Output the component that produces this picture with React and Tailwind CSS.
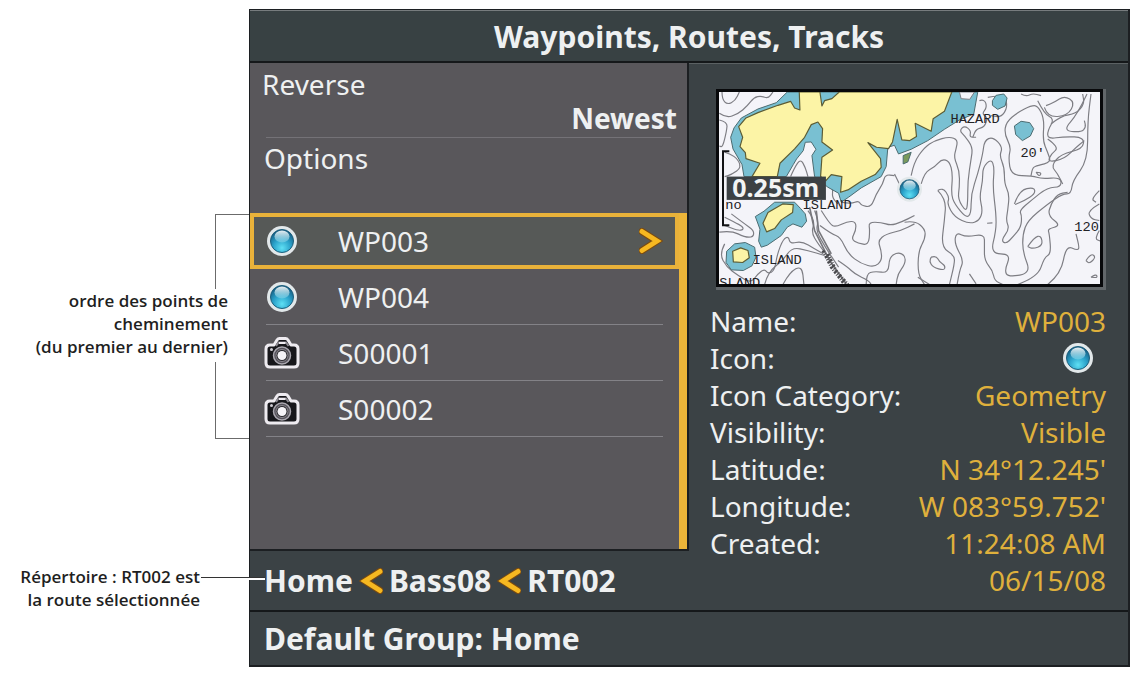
import clsx from "clsx";

const routePoints = [
  { name: "WP003", type: "waypoint" },
  { name: "WP004", type: "waypoint" },
  { name: "S00001", type: "snapshot" },
  { name: "S00002", type: "snapshot" },
];

const details = [
  { label: "Name:", value: "WP003" },
  { label: "Icon:", icon: true },
  { label: "Icon Category:", value: "Geometry" },
  { label: "Visibility:", value: "Visible" },
  { label: "Latitude:", value: "N 34°12.245'" },
  { label: "Longitude:", value: "W 083°59.752'" },
  { label: "Created:", value: "11:24:08 AM" },
  { label: "", value: "06/15/08" },
];

// depth contours, west and east half of the chart
const westContours = [
  "22,14 22,35 38,52 62,40 74,14",
  "14,78 34,92 70,80 98,56 118,30 140,26 160,34 175,14",
  "14,98 38,104 36,130 24,180 14,176",
  "30,195 62,205 82,240 50,262 30,268",
  "228,268 240,240 258,215 272,240 280,268",
  "340,285 356,300 352,330 370,350",
  "30,390 60,405 84,418 86,428 70,430 30,415",
  "14,435 50,430 90,450 116,450 118,430 90,410 50,380",
  "30,470 14,500 36,540 70,565 108,588 130,560 150,545 160,560 180,550 188,500 206,455 222,448 226,470 262,462 300,485 326,500",
  "150,592 160,555 205,520 232,480 280,490 330,505",
  "205,592 225,555 262,535 268,592",
  "280,370 302,400 290,435 310,470 350,520",
  "300,370 312,400 304,430 332,480 372,540",
  "316,415 350,440 378,450 400,500 440,530 480,540 502,520 500,490 490,460 515,440 560,430 600,410",
  "320,370 345,410 362,420 400,402 424,404 424,430 410,456 430,468 462,474 466,430 462,405 500,405 528,415 560,405 600,385",
  "380,345 410,350 432,340 440,355 470,360 485,320 505,290 512,262 540,265",
  "455,592 455,560 480,552 522,558 524,510 550,495 572,505 572,530 550,560 545,592",
  "370,520 400,540 420,560 462,580 470,592",
  "540,260 560,300 575,340",
];

const eastContours = [
  "0,405 30,400 62,425 62,455 42,490 40,560 60,592",
  "20,265 28,225 60,180 90,160 135,148 160,158 155,185 148,210 165,250 165,300 160,335 185,375 190,345 190,280 200,215 205,180 180,145 165,130 180,115 200,130 195,150 215,150",
  "50,290 60,255 90,240 112,215 135,222 145,260 140,320 150,350 185,392 200,380 200,320 220,260 235,200 240,160 265,148 295,180 285,205 300,240 300,290 315,320 310,370 305,400 315,425 290,460 305,470 325,450 350,420 352,385 345,370 380,340 430,300 470,300 470,270 410,275 385,265 320,265 312,210 320,180 300,140 305,105 340,75 380,55 400,55 420,95 415,160 430,195 440,225 400,235 385,240 380,265",
  "100,310 115,300 135,330 128,350 150,390 195,410 225,400 235,370 225,330 235,280 235,240 260,215 270,240 265,300 275,380 275,430 258,500 320,500 300,550 312,570 380,558 355,495 355,440 370,400 430,350 475,320 500,320 505,280 550,220 550,100 560,20",
  "100,310 125,335 120,400 110,480 150,505 150,530 135,592",
  "158,592 165,550 178,520 150,470 155,435 185,450 240,440 240,475 240,520 265,550 270,580 295,592",
  "195,560 215,590",
  "80,510 95,505 105,525 122,535 120,550 85,540 75,522 80,510",
  "330,350 345,308 390,300 392,320 360,340 332,352",
  "370,478 390,450 410,445 415,475 385,485 370,478",
  "340,592 400,570 420,510 440,500 435,440 430,425 470,415 430,385 440,350 460,320 490,315",
  "430,592 470,560 485,475 520,490 525,480 515,440",
  "400,40 420,80 450,95 430,130 430,155 480,148 540,150 535,185 470,200 440,235 460,260 475,290",
  "420,60 430,90 490,85 512,45 480,25 450,45 425,55",
  "440,110 470,85 515,80 540,50 535,20",
  "548,20 520,80 475,130 530,135 545,120 540,100",
  "430,155 465,180 440,200 430,225 480,215 515,180 540,160",
  "350,20 365,28 385,18 410,25",
  "225,40 240,35 248,60 232,80 250,90 240,120 215,125 205,150",
  "250,30 300,20 310,60 290,90 260,85",
  "395,255 412,255 405,268 395,255",
  "585,310 560,335 575,345",
  "585,350 550,370 560,395 585,400",
  "545,520 560,498 575,510 555,530 545,520",
  "560,570 575,560 580,572 560,570",
  "585,430 570,455 590,462",
  "75,592 40,570",
  "248,408 264,407",
];

// runs a quadratic curve through the midpoints of the list
const toPath = (list) => {
  const pts = list.split(" ").map((p) => p.split(",").map(Number));
  let d = `M${pts[0]}`;
  for (let i = 1; i < pts.length - 1; i++) {
    const [x, y] = pts[i];
    const [nx, ny] = pts[i + 1];
    d += ` Q${x},${y} ${(x + nx) / 2},${(y + ny) / 2}`;
  }
  return `${d} L${pts[pts.length - 1]}`;
};

const Sphere = (props) => (
  <svg viewBox="0 0 32 32" width="32" height="32" aria-hidden="true" {...props}>
    <defs>
      <radialGradient id="ball" cx="50%" cy="80%" r="75%">
        <stop offset="0" stopColor="#5fe0f4" />
        <stop offset="0.5" stopColor="#2ba3cb" />
        <stop offset="1" stopColor="#145a80" />
      </radialGradient>
      <linearGradient id="shine" x1="0" y1="0" x2="0" y2="1">
        <stop offset="0" stopColor="#ffffff" stopOpacity="0.9" />
        <stop offset="1" stopColor="#b8ecf5" stopOpacity="0.3" />
      </linearGradient>
    </defs>
    <circle cx="16" cy="16" r="15" fill="#e2e8ea" />
    <circle cx="16" cy="16" r="11.500" fill="url(#ball)" stroke="#1d5f7c" />
    <ellipse cx="16" cy="11.500" rx="7.500" ry="6" fill="url(#shine)" />
  </svg>
);

const Camera = () => (
  <svg viewBox="0 0 36 32" width="36" height="32" aria-hidden="true" className="shrink-0">
    <path
      d="M6 8h4l3-5q1-1.500 2.500-1.500h6q1.500 0 2.500 1.500l3 5h3q4 0 4 4v14q0 4-4 4H6q-4 0-4-4V12q0-4 4-4z"
      fill="#17171b"
      stroke="#eeebf0"
      strokeWidth="3"
      strokeLinejoin="round"
    />
    <path d="M12 9l2.500-3.500h7.500L24.500 9" fill="none" stroke="#8d8a91" strokeWidth="2" />
    <path d="M15 6h6.500" stroke="#eeebf0" strokeWidth="2" />
    <circle cx="7.500" cy="12.500" r="1.500" fill="#cfccd3" />
    <circle cx="18" cy="18.500" r="8.500" fill="#55525a" stroke="#aaa7af" strokeWidth="1.500" />
    <circle cx="18" cy="18.500" r="6" fill="#26252a" stroke="#8d8a91" />
    <circle cx="18" cy="18.500" r="4.500" fill="#f5f3f7" />
  </svg>
);

const Chevron = ({ left }) => (
  <svg viewBox="0 0 24 26" width="24" height="26" aria-hidden="true" className={clsx(left && "rotate-180")}>
    <path d="M3 3.500L18 13 3 22.500" fill="none" stroke="#7a4a10" strokeWidth="7" strokeLinecap="round" />
    <path d="M3 3.500L18 13 3 22.500" fill="none" stroke="#f6b821" strokeWidth="5" strokeLinecap="round" />
  </svg>
);

const Chart = () => (
  <svg
    viewBox="13 14 1144 578"
    role="img"
    aria-label="Chart preview"
    className="block w-full border-3 border-[#08090b] bg-[#f4f4f9]"
  >
    {/* DEPTH CONTOURS */}
    <g fill="none" stroke="#7d7d83" strokeWidth="3.500">
      {westContours.map((c) => (
        <path key={c} d={toPath(c)} />
      ))}
      <g transform="translate(570 0)">
        {eastContours.map((c) => (
          <path key={c} d={toPath(c)} />
        ))}
      </g>
    </g>
    {/* SHALLOWS */}
    <g fill="#79c0d2" stroke="#4b6b70" strokeWidth="3" strokeLinejoin="round">
      <path d="M218 14L185 46 130 65 80 92 58 122 48 150 55 185 82 232 88 268 215 268 236 232 246 215 266 190 272 165 290 164 304 186 292 205 300 268 340 300 372 318 380 345 402 330 440 302 500 268 515 238 520 180 540 174 552 200 590 186 640 160 690 126 735 98 778 80 790 14z" />
      <path d="M834 40L845 24 868 20 878 32 872 56 850 66 834 54zM900 116L920 102 946 106 958 124 948 146 924 160 904 142z" />
      <path d="M180 345L148 372 122 388 136 426 132 462 140 480 158 474 200 445 218 420 235 410 262 420 276 402 272 380 258 364 240 345z" />
      <path d="M92 466L60 470 36 492 34 526 50 548 86 550 112 536 124 510 120 480z" />
      <path d="M566 205L590 195 580 224 566 230z" fill="#7a9a5c" />
    </g>
    <path d="M735 14L740 34 766 36 780 14z" fill="#f4f4f9" stroke="#7d7d83" strokeWidth="3" />
    {/* LAND */}
    <g fill="#fcf4a6" stroke="#5c5c34" strokeWidth="3.500" strokeLinejoin="round">
      <path d="M254 14L256 68 240 62 228 42 190 54 130 76 94 92 72 118 84 150 76 178 92 196 94 214 136 228 112 268 188 268 196 228 240 185 270 150 290 112 310 104 324 124 322 164 354 188 322 210 318 268 334 280 350 262 382 268 378 315 400 308 440 282 482 262 500 240 498 214 460 166 486 180 522 184 534 164 548 96 562 158 586 160 606 148 602 108 650 132 656 94 690 72 712 14 374 14 352 34 330 40 322 56 316 14z" />
      <path d="M145 408L160 376 204 350 236 352 234 376 200 398 180 424 156 434z" />
      <path d="M54 492L78 482 100 490 104 512 84 526 56 524z" />
    </g>
    <path
      d="M285 360L300 430 345 520 395 590M305 370L312 430 350 500"
      fill="none"
      stroke="#77777c"
      strokeWidth="5"
    />
    <path d="M325 490L350 540 390 592M340 500L364 550 400 592" stroke="#4a4a4e" strokeWidth="9" strokeDasharray="7 4 3 4" fill="none" />
    {/* CHART LABELS */}
    <g fontFamily="Liberation Mono, monospace" fontSize="41" fill="#222226">
      <text x="708" y="106">HAZARD</text>
      <text x="918" y="210">20'</text>
      <text x="1080" y="430">120</text>
      <text x="264" y="364">ISLAND</text>
      <text x="114" y="530">ISLAND</text>
      <text x="14" y="600">SLAND</text>
      <text x="32" y="364">no</text>
    </g>
    <path d="M44 192H25V414H44" fill="none" stroke="#111214" strokeWidth="6" />
    {/* SCALE */}
    <rect x="36" y="268" width="298" height="70" fill="#3c4144" />
    <text x="53" y="328" fontFamily="Noto Sans, sans-serif" fontWeight="700" fontSize="75" fill="#f2f4f4">
      0.25sm
    </text>
    <Sphere x="545" y="266" width="80" height="80" />
  </svg>
);

const PointRow = ({ point, selected }) => (
  <li>
    <button
      type="button"
      className={clsx(
        "flex h-14 w-full items-center text-left",
        selected ? "border-4 border-[#e9b23a] bg-[#565957] px-3" : "px-4"
      )}
    >
      <span
        className={clsx(
          "flex h-full w-full items-center",
          !selected && "border-b border-[#838287]"
        )}
      >
        <span className="flex w-8 shrink-0 justify-center">
          {point.type === "waypoint" ? <Sphere /> : <Camera />}
        </span>
        <span className="grow pl-10 leading-none">{point.name}</span>
        {selected && <Chevron />}
      </span>
    </button>
  </li>
);

const Callouts = () => (
  <aside className="flex w-[249px] shrink-0 flex-col items-end pt-[205px] text-right font-['Open_Sans',sans-serif] text-[17px] font-semibold leading-[23px] text-[#1f1f1f]">
    <div className="h-[75px] w-[34px] border-l border-t border-[#6b6b6b]" />
    <p className="pr-[21px]">
      ordre des points de
      <br />
      cheminement
      <br />
      (du premier au dernier)
    </p>
    <div className="mt-1 h-[77px] w-[34px] border-b border-l border-[#6b6b6b]" />
    <div className="relative mt-[126px] pr-[49px]">
      <p>
        Répertoire : RT002 est
        <br />
        la route sélectionnée
      </p>
      {/* leader line runs over the edge of the screen */}
      <div className="absolute -right-4 top-3 z-10 h-[3px] w-16 border-t border-[#333333] bg-white" />
    </div>
  </aside>
);

const App = () => {
  return (
    <div className="flex min-h-screen bg-white pb-1.5 pr-1 pt-[9px] font-['Noto_Sans',sans-serif]">
      <Callouts />
      <main className="flex grow flex-col border border-r-2 border-b-2 border-[#1c1f22] bg-[#3b4245] text-[28px] text-[#eef0f1]">
        {/* HEADER */}
        <h1 className="flex h-[53px] items-center justify-center border-b-2 border-t border-b-[#15181a] border-t-[#777c7e] bg-[#384143] text-[30px] font-bold">
          Waypoints, Routes, Tracks
        </h1>

        {/* BODY */}
        <div className="grid grow grid-cols-2">
          <div className="flex flex-col">
            <section className="flex grow flex-col border-b-2 border-r-2 border-b-[#1c1f22] border-r-[#1c1f22] bg-[#59575b]">
              <button type="button" className="flex h-[74px] flex-col pl-3 pr-2.5 pt-1 text-left leading-[34px]">
                <span>Reverse</span>
                <span className="self-end font-bold">Newest</span>
              </button>
              <hr className="mx-4 border-[#747277]" />
              <button type="button" className="h-[75px] px-3.5 pb-9 text-left leading-none">
                Options
              </button>
              <div className="flex grow">
                <ul className="grow">
                  {routePoints.map((point, i) => (
                    <PointRow key={point.name} point={point} selected={i === 0} />
                  ))}
                </ul>
                <div className="w-2 bg-[#ecb539]" />
              </div>
            </section>
            <nav className="flex h-[59px] items-center gap-1.5 pl-3.5 text-[30px] font-bold">
              <a href="#home">Home</a>
              <Chevron left />
              <a href="#bass08">Bass08</a>
              <Chevron left />
              <a href="#rt002">RT002</a>
            </nav>
          </div>

          <section className="border-t border-[#5b6163] pl-[21px] pr-[22px] pt-[25px]">
            <div className="ml-1.5 border-b-3 border-r-3 border-[#62676a]">
              <Chart />
            </div>
            <dl className="mt-3">
              {details.map((row) => (
                <div key={row.label} className="flex h-[37px] items-center justify-between">
                  <dt>{row.label}</dt>
                  <dd className="text-[#dfb03c]">
                    {row.icon ? <Sphere className="mr-3" /> : row.value}
                  </dd>
                </div>
              ))}
            </dl>
          </section>
        </div>

        {/* FOOTER */}
        <footer className="flex h-[55px] items-center border-t-2 border-[#15181a] pl-3.5 text-[30px] font-bold">
          Default Group: Home
        </footer>
      </main>
    </div>
  );
};

export default App;
